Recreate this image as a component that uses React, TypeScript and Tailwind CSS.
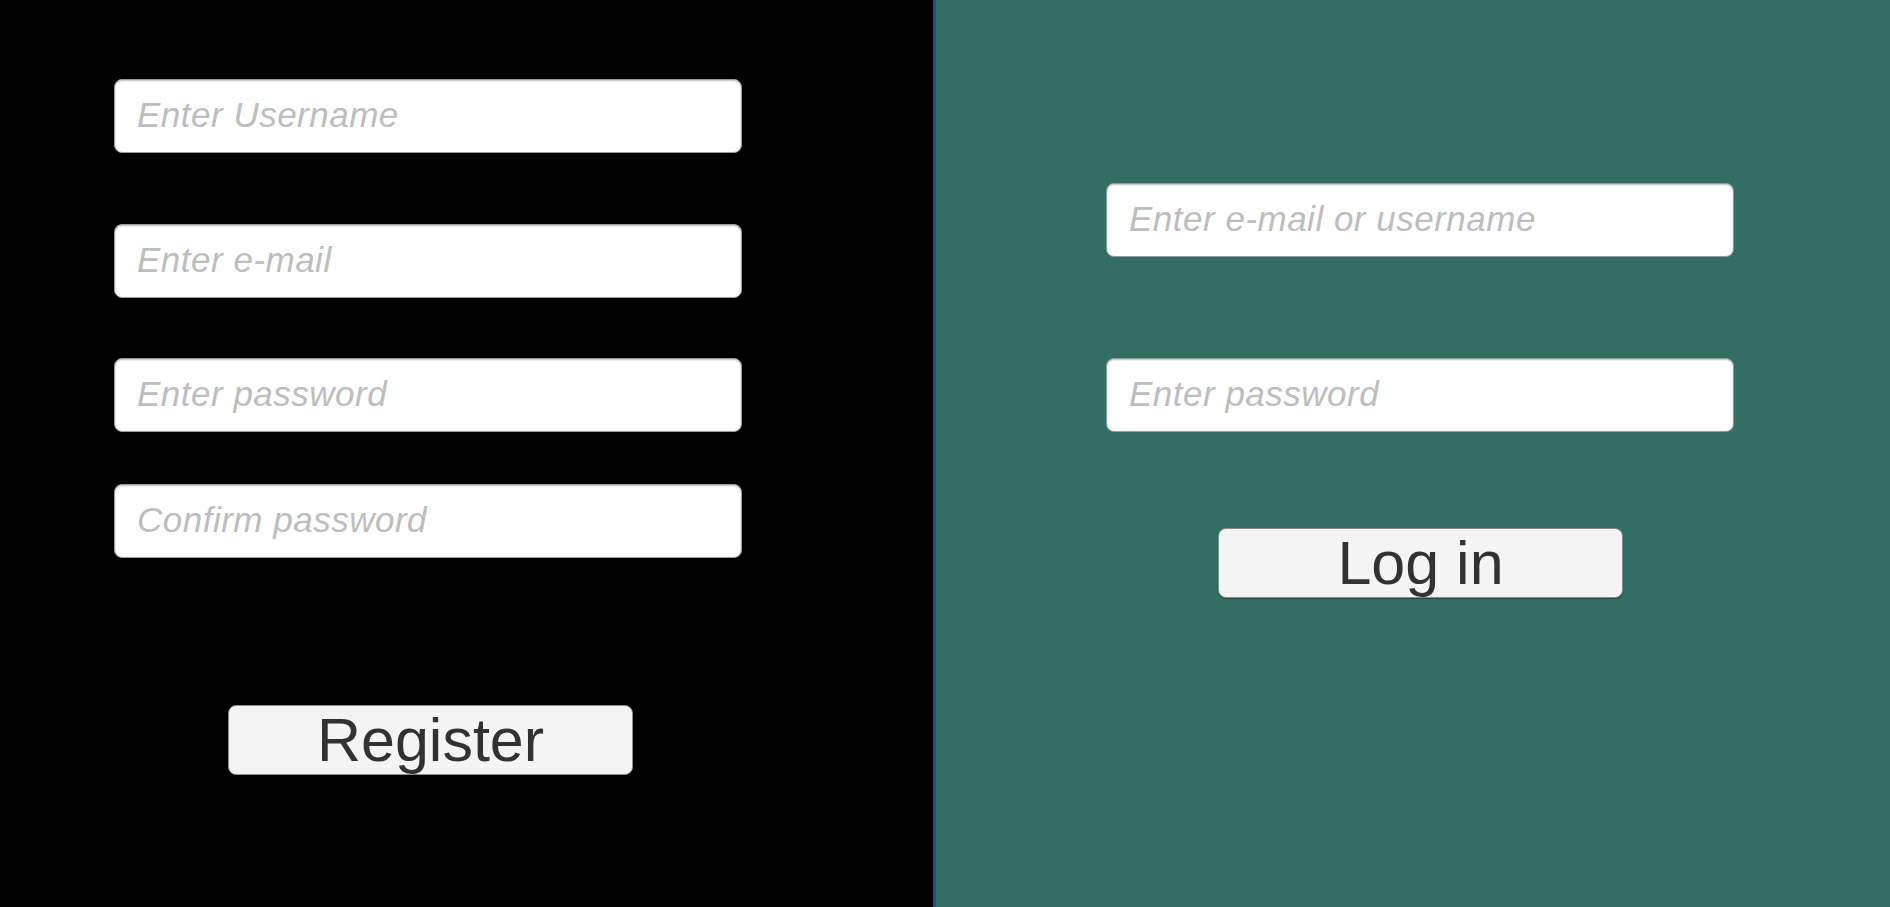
const font = { fontFamily: '"Liberation Sans", Arial, sans-serif' }

function Field({ placeholder, className = '' }: { placeholder: string; className?: string }) {
  return (
    <input
      type="text"
      placeholder={placeholder}
      style={font}
      className={`block w-[628px] h-[74px] rounded-[8px] bg-white border border-[#9a9a9a] shadow-[inset_0_1px_2px_rgba(0,0,0,0.25)] pl-[22px] pr-[18px] pb-[3px] text-[35px] tracking-[0.5px] italic text-[#333] placeholder:text-[#bdbdbd] outline-none ${className}`}
    />
  )
}

function BigButton({ label, className = '' }: { label: string; className?: string }) {
  return (
    <button
      type="button"
      style={font}
      className={`block w-[405px] h-[70px] rounded-[8px] bg-[#f4f4f4] border border-[#8a8a8a] shadow-[0_1px_1px_rgba(0,0,0,0.35)] text-[61px] leading-none text-[#323232] ${className}`}
    >
      {label}
    </button>
  )
}

export default function App() {
  return (
    <div className="flex h-[907px] w-full overflow-hidden">
      {/* register side */}
      <div className="w-[933px] h-full bg-black pl-[114px] pt-[79px]">
        <Field placeholder="Enter Username" />
        <Field placeholder="Enter e-mail" className="mt-[71px]" />
        <Field placeholder="Enter password" className="mt-[60px]" />
        <Field placeholder="Confirm password" className="mt-[52px]" />
        <BigButton label="Register" className="mt-[147px] ml-[114px]" />
      </div>
      <div className="w-[3px] h-full bg-[#2d4c7c]" />
      {/* login side */}
      <div className="flex-1 h-full bg-[#316f64] pl-[170px] pt-[183px]">
        <Field placeholder="Enter e-mail or username" />
        <Field placeholder="Enter password" className="mt-[101px]" />
        <BigButton label="Log in" className="mt-[96px] ml-[112px]" />
      </div>
    </div>
  )
}
